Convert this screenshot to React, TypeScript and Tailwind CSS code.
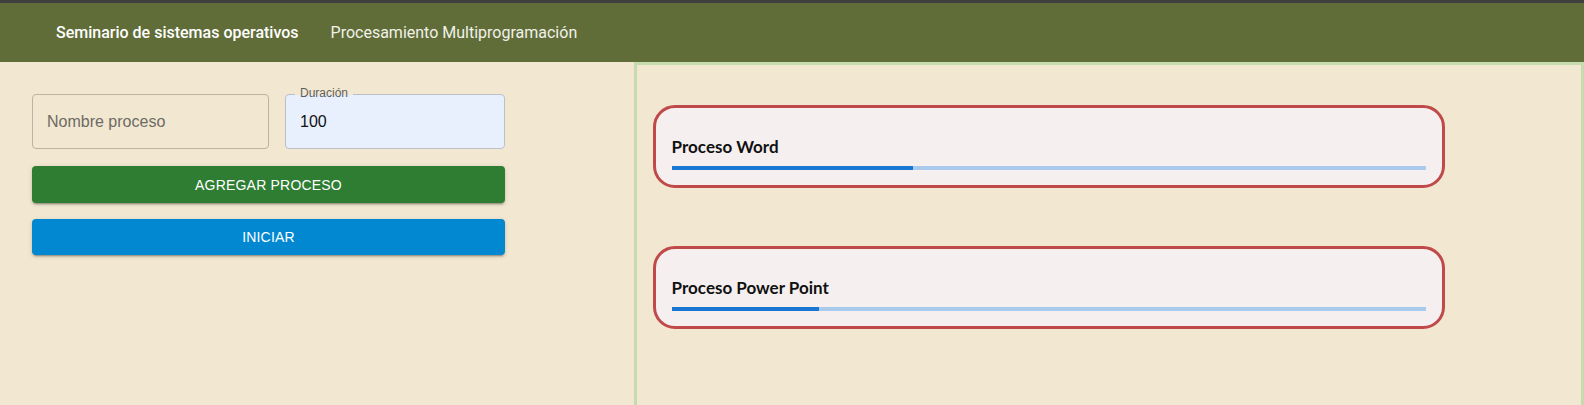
import React from 'react';

const procesos = [
  { nombre: 'Proceso Word', progreso: 32 },
  { nombre: 'Proceso Power Point', progreso: 19.5 },
];

const ProcesoCard: React.FC<{ nombre: string; progreso: number; first?: boolean }> = ({
  nombre,
  progreso,
  first,
}) => (
  <div
    className={`w-[792px] h-[83px] rounded-[22px] border-[3px] border-[#c0494a] bg-[#f5f0ef] px-[16px] pt-[27px] pb-[15px] ${
      first ? '' : 'mt-[58px]'
    }`}
  >
    <div className="h-6 text-[17px] font-bold leading-6 text-[#111] font-['Lato',sans-serif]">
      {nombre}
    </div>
    <div className="mt-[7px] h-1 w-full bg-[#a7caed]">
      <div className="h-full bg-[#1976d2]" style={{ width: `${progreso}%` }} />
    </div>
  </div>
);

export default function App() {
  return (
    <div className="flex h-screen flex-col overflow-hidden bg-[#f2e8d1] font-['Liberation_Sans',Arial,sans-serif]">
      <div className="h-[3px] bg-[#3f3f3f]" />

      {/* Header */}
      <header className="flex h-[59px] items-center gap-[32px] bg-[#606d38] pl-[56px] font-['Roboto',sans-serif] text-base text-white">
        <span className="font-medium">Seminario de sistemas operativos</span>
        <span className="text-[#f1f1ea]">Procesamiento Multiprogramación</span>
      </header>

      <main className="flex flex-1">
        {/* Form */}
        <section className="w-[40%] px-8 pt-8">
          <div className="flex gap-4">
            <div className="flex h-[55px] w-[237px] items-center rounded border border-[#bdb3a0] px-[14px] text-base text-[#6d6a64]">
              Nombre proceso
            </div>
            <div className="relative flex h-[55px] w-[220px] items-center rounded border border-[#b9c0ca] bg-[#e8f0fe] px-[14px] text-base text-[#111]">
              <span className="absolute left-[9px] top-[-9px] bg-[linear-gradient(to_bottom,#f2e8d1_9px,#e8f0fe_9px)] px-[5px] text-[12px] leading-[14px] text-[#5f5f5f]">
                Duración
              </span>
              100
            </div>
          </div>

          <button
            type="button"
            className="mt-[17px] flex h-[37px] w-[473px] items-center justify-center rounded bg-[#2e7d32] text-sm tracking-[0.2px] text-white shadow-[0_3px_1px_-2px_rgba(0,0,0,0.2),0_2px_2px_0_rgba(0,0,0,0.14),0_1px_5px_0_rgba(0,0,0,0.12)]"
          >
            AGREGAR PROCESO
          </button>
          <button
            type="button"
            className="mt-[16px] flex h-[36px] w-[473px] items-center justify-center rounded bg-[#0288d1] text-sm tracking-[0.2px] text-white shadow-[0_3px_1px_-2px_rgba(0,0,0,0.2),0_2px_2px_0_rgba(0,0,0,0.14),0_1px_5px_0_rgba(0,0,0,0.12)]"
          >
            INICIAR
          </button>
        </section>

        {/* Procesos */}
        <section className="w-[60%] border-[3px] border-b-0 border-[#c6dcae] pl-[16px] pt-[40px]">
          {procesos.map((p, i) => (
            <ProcesoCard key={p.nombre} nombre={p.nombre} progreso={p.progreso} first={i === 0} />
          ))}
        </section>
      </main>
    </div>
  );
}
